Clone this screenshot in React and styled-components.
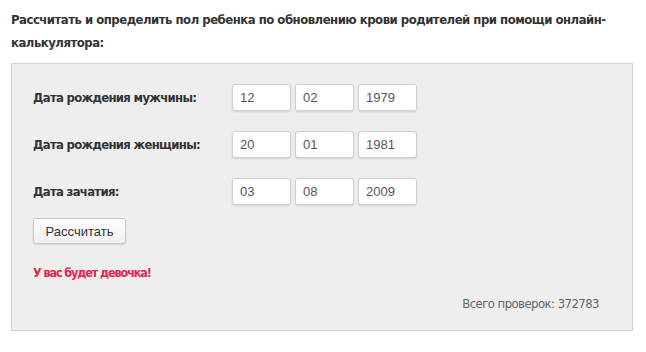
import React from "react";
import styled, { createGlobalStyle } from "styled-components";

const Global = createGlobalStyle`
  html, body { margin: 0; padding: 0; background: #fff; }
  body { font-family: "DejaVu Sans Condensed", "Liberation Sans", sans-serif; }
`;

const Page = styled.div`
  width: 646px;
  padding: 8px 13px 0 11px;
  box-sizing: border-box;
`;

const Title = styled.h2`
  margin: 0;
  font-family: "DejaVu Sans Condensed", sans-serif;
  font-weight: bold;
  font-size: 13px;
  letter-spacing: -0.5px;
  line-height: 23px;
  color: #333;
`;

const Panel = styled.div`
  margin-top: 9px;
  width: 622px;
  height: 268px;
  box-sizing: border-box;
  border: 1px solid #d2d2d2;
  background: #eeeeee;
  padding: 20px 33px 0 21px;
  display: flex;
  flex-direction: column;
`;

const Row = styled.div`
  display: flex;
  align-items: center;
  height: 27px;
  margin-bottom: 20px;
  &:nth-of-type(3) { margin-bottom: 13px; }
`;

const Label = styled.div`
  width: 199px;
  font-weight: bold;
  font-size: 13px;
  letter-spacing: -0.7px;
  color: #333;
`;

const Inputs = styled.div`
  display: flex;
  gap: 4px;
`;

const Field = styled.input`
  width: 59px;
  height: 27px;
  box-sizing: border-box;
  border: 1px solid #d0d0d0;
  border-radius: 3px;
  background: #fff;
  box-shadow: 0 1px 2px rgba(0, 0, 0, 0.12);
  padding: 0 7px;
  font-family: "Liberation Sans", Arial, sans-serif;
  font-size: 13px;
  color: #555;
  outline: none;
`;

const Button = styled.button`
  align-self: flex-start;
  width: 93px;
  height: 26px;
  border: 1px solid #c8c8c8;
  border-radius: 3px;
  background: linear-gradient(#ffffff, #efefef);
  box-shadow: 0 1px 2px rgba(0, 0, 0, 0.12);
  font-family: "Liberation Sans", Arial, sans-serif;
  font-size: 13px;
  color: #333;
  padding: 0;
  cursor: pointer;
`;

const Result = styled.div`
  margin-top: 19px;
  font-weight: bold;
  font-size: 12.5px;
  letter-spacing: -1.1px;
  line-height: 20px;
  color: #e5254f;
`;

const Counter = styled.div`
  margin-top: 11px;
  text-align: right;
  font-size: 13px;
  letter-spacing: -0.55px;
  line-height: 20px;
  color: #666;
`;

const rows = [
  { label: "Дата рождения мужчины:", values: ["12", "02", "1979"] },
  { label: "Дата рождения женщины:", values: ["20", "01", "1981"] },
  { label: "Дата зачатия:", values: ["03", "08", "2009"] },
];

export default function App() {
  return (
    <>
      <Global />
      <Page>
        <Title>
          Рассчитать и определить пол ребенка по обновлению крови родителей при помощи онлайн-калькулятора:
        </Title>
        <Panel>
          {rows.map((r) => (
            <Row key={r.label}>
              <Label>{r.label}</Label>
              <Inputs>
                {r.values.map((v, i) => (
                  <Field key={i} defaultValue={v} />
                ))}
              </Inputs>
            </Row>
          ))}
          <Button>Рассчитать</Button>
          <Result>У вас будет девочка!</Result>
          <Counter>Всего проверок: 372783</Counter>
        </Panel>
      </Page>
    </>
  );
}
